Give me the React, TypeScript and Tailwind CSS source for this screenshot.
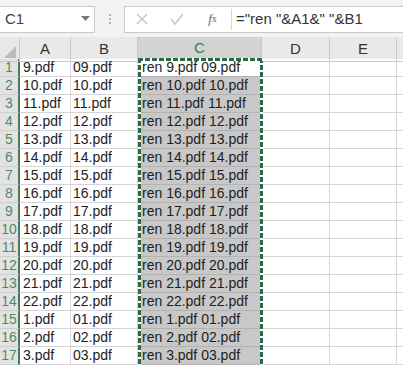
import React from "react";

const rows: [string, string][] = [
  ["9.pdf", "09.pdf"],
  ["10.pdf", "10.pdf"],
  ["11.pdf", "11.pdf"],
  ["12.pdf", "12.pdf"],
  ["13.pdf", "13.pdf"],
  ["14.pdf", "14.pdf"],
  ["15.pdf", "15.pdf"],
  ["16.pdf", "16.pdf"],
  ["17.pdf", "17.pdf"],
  ["18.pdf", "18.pdf"],
  ["19.pdf", "19.pdf"],
  ["20.pdf", "20.pdf"],
  ["21.pdf", "21.pdf"],
  ["22.pdf", "22.pdf"],
  ["1.pdf", "01.pdf"],
  ["2.pdf", "02.pdf"],
  ["3.pdf", "03.pdf"],
];

const cols = "grid grid-cols-[20px_51px_67px_124px_68px_67px_1fr]";

export default function App() {
  return (
    <div className="w-[403px] h-[366px] overflow-hidden bg-white text-[#1e1e1e] font-['Liberation_Sans',sans-serif]">
      {/* formula bar */}
      <div className="h-[37px] bg-[#f3f3f3] flex items-center pt-[1px]">
        <div className="w-[95px] h-[27px] bg-white border border-[#c9c9c9] border-l-0 flex items-center pl-[5px] pr-[4px] text-[15px] text-[#444]">
          <span className="flex-1">C1</span>
          <svg width="9" height="6" viewBox="0 0 9 6"><path d="M0 0h9L4.5 5z" fill="#777" /></svg>
        </div>
        <div className="w-[29px] flex flex-col items-center gap-[2px]">
          <span className="w-[2px] h-[2px] bg-[#b5b5b5]" />
          <span className="w-[2px] h-[2px] bg-[#b5b5b5]" />
          <span className="w-[2px] h-[2px] bg-[#b5b5b5]" />
        </div>
        <div className="flex-1 h-[27px] bg-white border border-[#c9c9c9] border-r-0 flex items-center">
          <div className="w-[34px] flex justify-center">
            <svg width="12" height="12" viewBox="0 0 12 12"><path d="M1 1l10 10M11 1L1 11" stroke="#c2c2c2" strokeWidth="1.4" /></svg>
          </div>
          <div className="w-[35px] flex justify-center">
            <svg width="14" height="12" viewBox="0 0 14 12"><path d="M1 6l4 5 8-10" fill="none" stroke="#c2c2c2" strokeWidth="1.4" /></svg>
          </div>
          <div className="w-[37px] flex justify-center text-[13px] italic text-[#666] font-['Liberation_Serif',serif]">
            f<span className="text-[10px] not-italic relative top-[2px]">x</span>
          </div>
          <div className="w-[1px] h-[21px] bg-[#d6d6d6]" />
          <div className="pl-[4px] text-[15px] text-[#333] whitespace-pre">="ren "&A1&" "&B1</div>
        </div>
      </div>

      {/* sheet */}
      <div className="relative">
        <div className={`${cols} h-[22px] bg-[#e9e9e9] text-[15px] text-[#333]`}>
          <div className="relative border-r border-b border-[#c8c8c8]">
            <svg className="absolute right-[3px] bottom-[3px]" width="12" height="12" viewBox="0 0 12 12"><path d="M12 0v12H0z" fill="#bdbdbd" /></svg>
          </div>
          <div className="border-r border-b border-[#c8c8c8] flex items-center justify-center">A</div>
          <div className="border-r border-b border-[#c8c8c8] flex items-center justify-center">B</div>
          <div className="bg-[#d3d3d3] border-r border-b-2 border-[#c8c8c8] border-b-[#217346] flex items-center justify-center text-[#3f7b58]">C</div>
          <div className="border-r border-b border-[#c8c8c8] flex items-center justify-center">D</div>
          <div className="border-r border-b border-[#c8c8c8] flex items-center justify-center">E</div>
          <div className="border-b border-[#c8c8c8]" />
        </div>
        {rows.map(([a, b], i) => (
          <div key={i} className={`${cols} h-[18px] text-[14px] leading-[17px]`}>
            <div className="bg-[#e2e2e2] border-r-2 border-r-[#4d7a5e] border-b border-b-[#cfcfcf] text-[#4f8a66] text-center text-[14px]">{i + 1}</div>
            <div className="border-r border-b border-[#d6d6d6] pl-[3px] whitespace-nowrap">{a}</div>
            <div className="border-r border-b border-[#d6d6d6] pl-[2px] whitespace-nowrap">{b}</div>
            <div className={`${i === 0 ? "bg-white" : "bg-[#c8c8c8]"} border-b border-[#b3b3b3] pl-[4px] whitespace-nowrap`}>ren {a} {b}</div>
            <div className="border-r border-b border-[#d6d6d6]" />
            <div className="border-r border-b border-[#d6d6d6]" />
            <div className="border-b border-[#d6d6d6]" />
          </div>
        ))}
        {/* copy marquee over column C */}
        <div className="absolute left-[138px] top-[21px] w-[125px] h-[360px] pointer-events-none">
          <div className="absolute left-0 top-0 bottom-0 w-[3px] bg-[repeating-linear-gradient(180deg,#2c6844_0px,#2c6844_5px,#ffffff_5px,#ffffff_7px)]" />
          <div className="absolute right-0 top-0 bottom-0 w-[3px] bg-[repeating-linear-gradient(180deg,#2c6844_0px,#2c6844_5px,#ffffff_5px,#ffffff_7px)]" />
          <div className="absolute left-0 right-0 top-0 h-[3px] bg-[repeating-linear-gradient(90deg,#2c6844_0px,#2c6844_5px,#ffffff_5px,#ffffff_7px)]" />
        </div>
      </div>
    </div>
  );
}
